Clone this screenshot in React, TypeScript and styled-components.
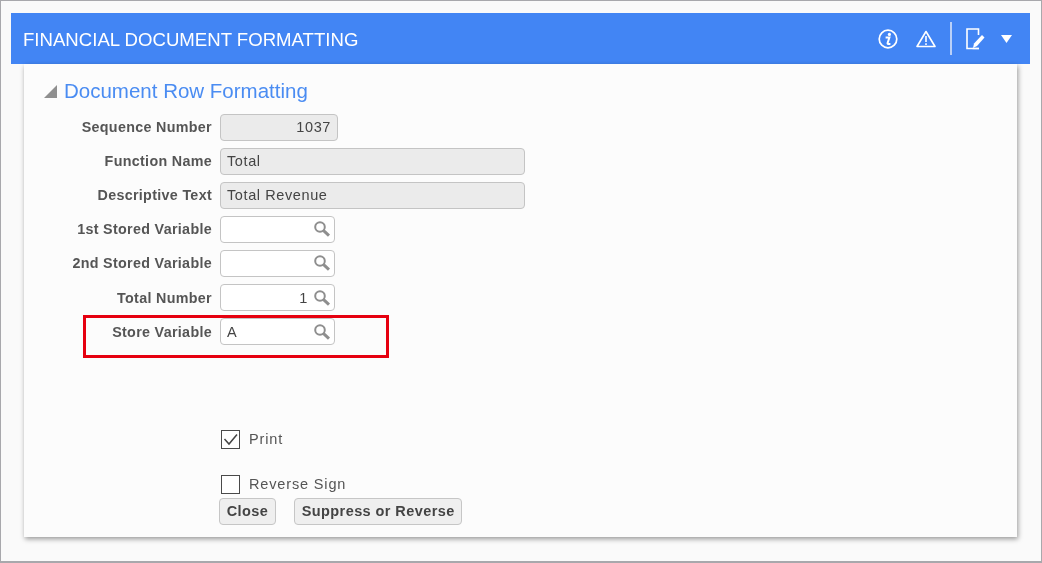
import React from "react"
import styled, { createGlobalStyle } from "styled-components"

const GlobalStyle = createGlobalStyle`
  html, body {
    margin: 0;
    padding: 0;
    background: #fafafa;
  }
`

const Frame = styled.div`
  width: 1042px;
  height: 563px;
  box-sizing: border-box;
  border: 1px solid #a8a8ac;
  border-bottom-width: 2px;
  padding: 12px 11px 0 10px;
  background: #fafafa;
  font-family: "Liberation Sans", Arial, sans-serif;
  overflow: hidden;
  filter: blur(0.35px);
`

const Header = styled.div`
  height: 51px;
  background: #4285f4;
  display: flex;
  align-items: center;
  justify-content: space-between;
  padding: 0 18px 0 12px;
`

const Title = styled.div`
  color: #fff;
  font-size: 18.6px;
  position: relative;
  top: 1px;
`

const Tools = styled.div`
  display: flex;
  align-items: center;
  color: #fff;
`

const Divider = styled.div`
  width: 2px;
  height: 33px;
  background: #b9d0f8;
  margin: 0 14px 0 14px;
`

const Panel = styled.div`
  position: relative;
  margin: 0 13px 0 13px;
  height: 473px;
  box-sizing: border-box;
  background: #fcfcfc;
  box-shadow: 1px 2px 5px rgba(0, 0, 0, 0.4);
  padding: 13px 0 0 20px;
`

const SectionHead = styled.div`
  display: flex;
  align-items: center;
  gap: 7px;
  color: #4a8cf2;
  font-size: 20.5px;
  height: 28px;
`

const Form = styled.div`
  display: flex;
  flex-direction: column;
  margin-top: 5px;
`

const Row = styled.div`
  display: flex;
  align-items: center;
  height: 34.1px;
`

const Label = styled.div`
  width: 168px;
  text-align: right;
  color: #555;
  font-size: 14.3px;
  font-weight: bold;
  letter-spacing: 0.32px;
  white-space: nowrap;
`

const Field = styled.div<{ $w: number; $readOnly?: boolean; $right?: boolean }>`
  width: ${p => p.$w}px;
  height: 27px;
  margin-left: 8px;
  box-sizing: border-box;
  border: 1px solid #c4c4c4;
  border-radius: 4px;
  background: ${p => (p.$readOnly ? "#ebebeb" : "#fff")};
  color: #444;
  font-size: 14.5px;
  letter-spacing: 0.6px;
  display: flex;
  align-items: center;
  justify-content: ${p => (p.$right ? "flex-end" : "flex-start")};
  padding: 0 6px;
`

const Lookup = styled(Field)`
  padding: 0 3px 0 6px;
`

const LookupValue = styled.span<{ $right?: boolean }>`
  flex: 1;
  text-align: ${p => (p.$right ? "right" : "left")};
  padding-right: 5px;
`

const Highlight = styled.div`
  position: absolute;
  left: 59px;
  top: 251px;
  width: 306px;
  height: 43px;
  box-sizing: border-box;
  border: 3px solid #e6000f;
`

const Checks = styled.div`
  display: flex;
  flex-direction: column;
  margin: 81px 0 0 177px;
`

const CheckRow = styled.div<{ $gap: number }>`
  display: flex;
  align-items: center;
  height: 20px;
  gap: 9px;
  margin-bottom: ${p => p.$gap}px;
  color: #555;
  font-size: 14.5px;
  letter-spacing: 0.85px;
`

const CheckBox = styled.div`
  width: 19px;
  height: 19px;
  box-sizing: border-box;
  border: 1.5px solid #4a4a4a;
  background: #fff;
  display: flex;
  align-items: center;
  justify-content: center;
`

const CheckLabel = styled.span`
  position: relative;
  top: -1px;
`

const Buttons = styled.div`
  display: flex;
  gap: 18px;
  margin: 3px 0 0 -2px;
`

const Button = styled.div`
  height: 27px;
  box-sizing: border-box;
  padding: 0 6.7px;
  border: 1px solid #c6c6c6;
  border-radius: 4px;
  background: #efefef;
  color: #444;
  font-size: 14.5px;
  font-weight: bold;
  letter-spacing: 0.42px;
  display: flex;
  align-items: center;
`

const SearchIcon = () => (
  <svg width="18" height="18" viewBox="0 0 18 18" fill="none">
    <circle cx="7" cy="7" r="4.8" stroke="#8e8e8e" strokeWidth="2" />
    <path d="M10.6 10.6 L16 15.6" stroke="#8e8e8e" strokeWidth="3" />
  </svg>
)

const InfoIcon = () => (
  <svg width="20" height="20" viewBox="0 0 20 20" fill="none" stroke="currentColor" style={{ marginLeft: 1 }}>
    <circle cx="10" cy="10" r="8.8" strokeWidth="1.7" />
    <circle cx="11.4" cy="5.4" r="1.6" fill="currentColor" stroke="none" />
    <path d="M7.6 8.6 H11.4 L9.6 14 Q9.4 15 10.2 15 H12.4" strokeWidth="2" />
  </svg>
)

const WarnIcon = () => (
  <svg width="20" height="18" viewBox="0 0 20 18" fill="none" stroke="currentColor" style={{ marginLeft: 18 }}>
    <path d="M10 1.5 L19 16.5 H1 Z" strokeWidth="1.6" strokeLinejoin="round" />
    <path d="M10 6 V12 M10 13.2 V15" strokeWidth="1.6" />
  </svg>
)

const NoteIcon = () => (
  <svg width="20" height="22" viewBox="0 0 20 22" fill="none" stroke="currentColor">
    <path d="M13 20.5 H1 V1 H12.5 V7" strokeWidth="1.6" />
    <path d="M7 20 L8 15.5 L16 7 L18.5 9.5 L11 18 Z" fill="currentColor" stroke="none" />
    <path d="M6.5 20.5 H13" strokeWidth="1.4" />
  </svg>
)

const CaretIcon = () => (
  <svg width="11" height="8" viewBox="0 0 11 8" style={{ marginLeft: 15 }}>
    <path d="M0 0 H11 L5.5 8 Z" fill="currentColor" />
  </svg>
)

const CollapseIcon = () => (
  <svg width="13" height="13" viewBox="0 0 13 13">
    <path d="M13 0 V13 H0 Z" fill="#8f8f8f" />
  </svg>
)

const CheckMark = () => (
  <svg width="15" height="13" viewBox="0 0 15 13" fill="none">
    <path d="M1.5 6 L6 11 L14 1.5" stroke="#444" strokeWidth="1.5" />
  </svg>
)

const lookups = [
  { label: "1st Stored Variable", value: "" },
  { label: "2nd Stored Variable", value: "" },
  { label: "Total Number", value: "1", right: true },
  { label: "Store Variable", value: "A" }
]

export default function App() {
  return (
    <Frame>
      <GlobalStyle />
      <Header>
        <Title>FINANCIAL DOCUMENT FORMATTING</Title>
        <Tools>
          <InfoIcon />
          <WarnIcon />
          <Divider />
          <NoteIcon />
          <CaretIcon />
        </Tools>
      </Header>
      <Panel>
        <SectionHead>
          <CollapseIcon />
          Document Row Formatting
        </SectionHead>
        <Form>
          <Row>
            <Label>Sequence Number</Label>
            <Field $w={118} $readOnly $right>1037</Field>
          </Row>
          <Row>
            <Label>Function Name</Label>
            <Field $w={305} $readOnly>Total</Field>
          </Row>
          <Row>
            <Label>Descriptive Text</Label>
            <Field $w={305} $readOnly>Total Revenue</Field>
          </Row>
          {lookups.map(item => (
            <Row key={item.label}>
              <Label>{item.label}</Label>
              <Lookup $w={115}>
                <LookupValue $right={item.right}>{item.value}</LookupValue>
                <SearchIcon />
              </Lookup>
            </Row>
          ))}
        </Form>
        <Checks>
          <CheckRow $gap={25}>
            <CheckBox><CheckMark /></CheckBox>
            <CheckLabel>Print</CheckLabel>
          </CheckRow>
          <CheckRow $gap={0}>
            <CheckBox />
            <CheckLabel>Reverse Sign</CheckLabel>
          </CheckRow>
          <Buttons>
            <Button>Close</Button>
            <Button>Suppress or Reverse</Button>
          </Buttons>
        </Checks>
        <Highlight />
      </Panel>
    </Frame>
  )
}
